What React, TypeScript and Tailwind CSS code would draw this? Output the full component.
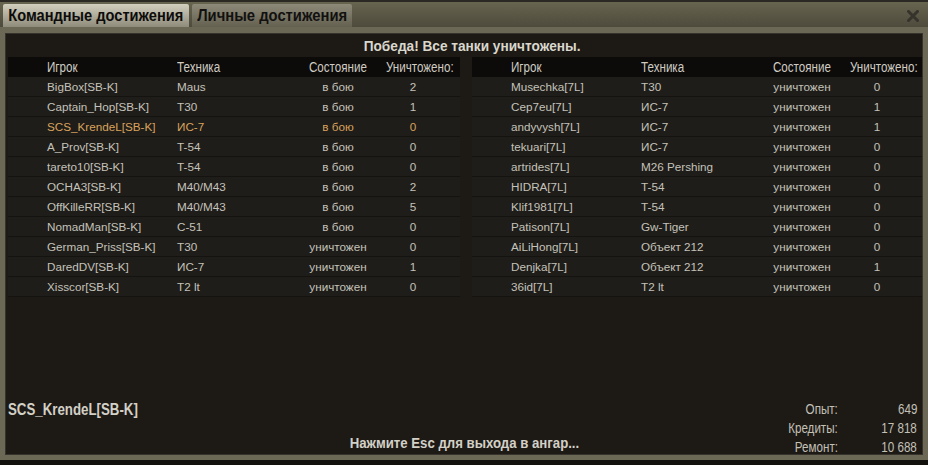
import React from "react";

type Row = { name: string; tank: string; state: string; kills: number; me?: boolean };

const team: Row[] = [
  { name: "BigBox[SB-K]", tank: "Maus", state: "в бою", kills: 2 },
  { name: "Captain_Hop[SB-K]", tank: "T30", state: "в бою", kills: 1 },
  { name: "SCS_KrendeL[SB-K]", tank: "ИС-7", state: "в бою", kills: 0, me: true },
  { name: "A_Prov[SB-K]", tank: "T-54", state: "в бою", kills: 0 },
  { name: "tareto10[SB-K]", tank: "T-54", state: "в бою", kills: 0 },
  { name: "OCHA3[SB-K]", tank: "M40/M43", state: "в бою", kills: 2 },
  { name: "OffKilleRR[SB-K]", tank: "M40/M43", state: "в бою", kills: 5 },
  { name: "NomadMan[SB-K]", tank: "С-51", state: "в бою", kills: 0 },
  { name: "German_Priss[SB-K]", tank: "T30", state: "уничтожен", kills: 0 },
  { name: "DaredDV[SB-K]", tank: "ИС-7", state: "уничтожен", kills: 1 },
  { name: "Xisscor[SB-K]", tank: "T2 lt", state: "уничтожен", kills: 0 },
];

const enemies: Row[] = [
  { name: "Musechka[7L]", tank: "T30", state: "уничтожен", kills: 0 },
  { name: "Cep7eu[7L]", tank: "ИС-7", state: "уничтожен", kills: 1 },
  { name: "andyvysh[7L]", tank: "ИС-7", state: "уничтожен", kills: 1 },
  { name: "tekuari[7L]", tank: "ИС-7", state: "уничтожен", kills: 0 },
  { name: "artrides[7L]", tank: "M26 Pershing", state: "уничтожен", kills: 0 },
  { name: "HIDRA[7L]", tank: "T-54", state: "уничтожен", kills: 0 },
  { name: "Klif1981[7L]", tank: "T-54", state: "уничтожен", kills: 0 },
  { name: "Patison[7L]", tank: "Gw-Tiger", state: "уничтожен", kills: 0 },
  { name: "AiLiHong[7L]", tank: "Объект 212", state: "уничтожен", kills: 0 },
  { name: "Denjka[7L]", tank: "Объект 212", state: "уничтожен", kills: 1 },
  { name: "36id[7L]", tank: "T2 lt", state: "уничтожен", kills: 0 },
];

function TeamTable({ rows, width }: { rows: Row[]; width: string }) {
  return (
    <div className={width}>
      <div className="grid h-[20px] grid-cols-[39px_130px_121px_80px_1fr] items-center bg-[#0c0b09] text-[14px] leading-[20px] whitespace-nowrap text-[#cfccc3]">
        <div />
        <div><span className="inline-block origin-left scale-x-[0.83]">Игрок</span></div>
        <div><span className="inline-block origin-left scale-x-[0.83]">Техника</span></div>
        <div className="text-center"><span className="inline-block origin-center scale-x-[0.83]">Состояние</span></div>
        <div className="pl-[8px]"><span className="inline-block origin-left scale-x-[0.83]">Уничтожено:</span></div>
      </div>
      {rows.map((r) => (
        <div
          key={r.name}
          className={`grid h-[20px] grid-cols-[39px_130px_121px_80px_70px] items-center border-b border-[#141310] bg-[#1f1d19] text-[11.7px] leading-[19px] whitespace-nowrap ${
            r.me ? "text-[#d9a25c]" : "text-[#c4c2ba]"
          }`}
        >
          <div />
          <div>{r.name}</div>
          <div>{r.tank}</div>
          <div className="text-center">{r.state}</div>
          <div className="text-center">{r.kills}</div>
        </div>
      ))}
    </div>
  );
}

export default function App() {
  return (
    <div className="h-[465px] w-[928px] overflow-hidden bg-[#12110e] font-['Liberation_Sans',Arial,sans-serif]">
      <div className="h-[2px] bg-[#2a2924]" />

      <div className="relative flex h-[25px] items-end gap-[3px] bg-gradient-to-b from-[#67644f] to-[#4e4b3d] pl-[3px]">
        <div className="flex h-[23px] w-[186px] items-center justify-center rounded-t-[2px] bg-gradient-to-b from-[#d2cfbe] to-[#8f8c7b] text-[17px] font-bold whitespace-nowrap text-[#0d0c0a]">
          <span className="inline-block origin-center scale-x-[0.86]">Командные достижения</span>
        </div>
        <div className="flex h-[23px] w-[160px] items-center justify-center rounded-t-[2px] bg-gradient-to-b from-[#8d8a79] to-[#646151] text-[17px] font-bold whitespace-nowrap text-[#121110]">
          <span className="inline-block origin-center scale-x-[0.87]">Личные достижения</span>
        </div>
        <svg className="absolute right-[9px] top-[8px]" width="12" height="12" viewBox="0 0 12 12">
          <path d="M1.5 1.5 L10.5 10.5 M10.5 1.5 L1.5 10.5" stroke="#35332b" strokeWidth="3" strokeLinecap="square" />
        </svg>
      </div>

      <div className="h-[433px] bg-[#6b6856] px-[5px] pt-[6px] pb-[5px]">
        <div className="flex h-full flex-col border border-[#35332b] bg-[#1d1a16]">
          <div className="h-[23px] pl-[16px] text-center text-[15px] font-bold leading-[24px] whitespace-nowrap text-[#dad7cd]">
            <span className="inline-block origin-center scale-x-[0.91]">Победа! Все танки уничтожены.</span>
          </div>

          <div className="flex gap-[12px] pl-[2px]">
            <TeamTable rows={team} width="w-[452px]" />
            <TeamTable rows={enemies} width="w-[450px]" />
          </div>

          <div className="flex-1" />

          <div className="grid h-[54px] grid-cols-[1fr_auto_1fr] whitespace-nowrap text-[#d3d0c6]">
            <div className="pl-[2px] text-[16px] font-bold leading-[19px]">
              <span className="inline-block origin-left scale-x-[0.83]">SCS_KrendeL[SB-K]</span>
            </div>
            <div className="pt-[35px] text-center text-[15px] font-bold leading-[16px]">
              <span className="inline-block origin-center scale-x-[0.88]">Нажмите Esc для выхода в ангар...</span>
            </div>
            <div className="grid grid-cols-[auto_60px] justify-end gap-x-[19px] pr-[5px] text-[14px] leading-[19px] text-[#c3c0b6]">
              <div className="text-right"><span className="inline-block origin-right scale-x-[0.83]">Опыт:</span></div>
              <div className="text-right"><span className="inline-block origin-right scale-x-[0.83]">649</span></div>
              <div className="text-right"><span className="inline-block origin-right scale-x-[0.83]">Кредиты:</span></div>
              <div className="text-right"><span className="inline-block origin-right scale-x-[0.83]">17 818</span></div>
              <div className="text-right"><span className="inline-block origin-right scale-x-[0.83]">Ремонт:</span></div>
              <div className="text-right"><span className="inline-block origin-right scale-x-[0.83]">10 688</span></div>
            </div>
          </div>
        </div>
      </div>

      <div className="h-[5px] bg-[#12110e]" />
    </div>
  );
}
